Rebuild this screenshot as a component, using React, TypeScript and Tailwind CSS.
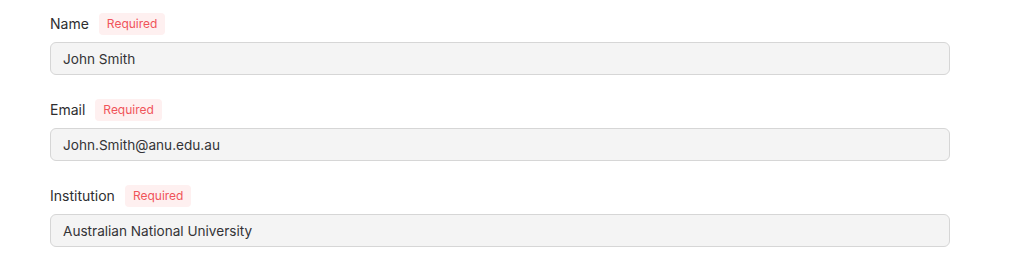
const fields = [
  { label: "Name", value: "John Smith" },
  { label: "Email", value: "John.Smith@anu.edu.au" },
  { label: "Institution", value: "Australian National University" },
];

function Field({ label, value }: { label: string; value: string }) {
  return (
    <div className="flex flex-col gap-[7px]">
      <div className="flex items-center h-[22px]">
        <span className="text-sm text-[#2e2e30]">{label}</span>
        <span className="ml-2.5 h-[22px] px-2 flex items-center rounded bg-[#fef0f0] text-xs text-[#f0545a]">
          Required
        </span>
      </div>
      <input
        readOnly
        value={value}
        className="h-[33px] w-[900px] rounded-md border border-[#d6d6d6] bg-[#f4f4f4] px-3 text-[13.6px] text-[#333336] outline-none"
      />
    </div>
  );
}

export default function App() {
  return (
    <div className="min-h-[270px] bg-white pl-[50px] pt-[13px] font-['Inter',sans-serif]">
      <div className="flex flex-col gap-6">
        {fields.map((f) => (
          <Field key={f.label} label={f.label} value={f.value} />
        ))}
      </div>
    </div>
  );
}
